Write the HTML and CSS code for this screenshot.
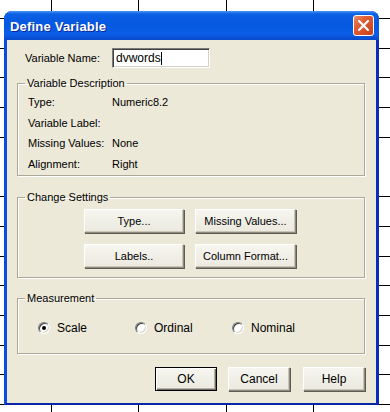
FILE: index.html
```html
<!DOCTYPE html>
<html lang="en">
<head>
  <meta charset="UTF-8">
  <title>Define Variable</title>
  <link rel="stylesheet" href="styles.css">
</head>
<body>

  <div class="window">
    <div class="titlebar">
      <span class="title">Define Variable</span>
      <button class="close-btn" aria-label="Close">
        <svg width="11" height="11" viewBox="0 0 11 11">
          <path d="M1 1 L10 10 M10 1 L1 10" stroke="#fff" stroke-width="2.2" stroke-linecap="square" fill="none"/>
        </svg>
      </button>
    </div>

    <div class="client">
      <div class="name-row">
        <span class="name-label">Variable Name:</span>
        <div class="textbox">dvwords<span class="caret"></span></div>
      </div>

      <fieldset class="group group-desc">
        <legend>Variable Description</legend>
        <div class="desc-grid">
          <span>Type:</span><span>Numeric8.2</span>
          <span>Variable Label:</span><span></span>
          <span>Missing Values:</span><span>None</span>
          <span>Alignment:</span><span>Right</span>
        </div>
      </fieldset>

      <fieldset class="group group-settings">
        <legend>Change Settings</legend>
        <div class="settings-grid">
          <button class="btn">Type...</button>
          <button class="btn">Missing Values...</button>
          <button class="btn">Labels..</button>
          <button class="btn">Column Format...</button>
        </div>
      </fieldset>

      <fieldset class="group group-measure">
        <legend>Measurement</legend>
        <div class="radio-row">
          <label class="radio"><span class="radio-dot checked"></span>Scale</label>
          <label class="radio"><span class="radio-dot"></span>Ordinal</label>
          <label class="radio"><span class="radio-dot"></span>Nominal</label>
        </div>
      </fieldset>

      <div class="dialog-buttons">
        <button class="btn btn-default">OK</button>
        <button class="btn">Cancel</button>
        <button class="btn btn-help">Help</button>
      </div>
    </div>
  </div>

</body>
</html>
```

FILE: styles.css
```css
body {
  margin: 0;
  padding: 11px 0 0 4px;
  height: 412px;
  box-sizing: border-box;
  overflow: hidden;
  font-family: "Liberation Sans", Arial, sans-serif;
  font-size: 11px;
  color: #000;
  background-color: #fff;
  /* spreadsheet grid behind the dialog */
  background-image:
    linear-gradient(#000, #000),
    linear-gradient(#000, #000),
    linear-gradient(#000, #000),
    linear-gradient(#000, #000),
    repeating-linear-gradient(to bottom, transparent 0 18px, #000 18px 19px, transparent 19px 29.7px);
  background-size: 1px 100%, 1px 100%, 1px 100%, 1px 100%, 100% 100%;
  background-position: 51px 0, 138px 0, 226px 0, 313px 0, 0 0;
  background-repeat: no-repeat;
}

.window {
  width: 375px;
  height: 394px;
  display: flex;
  flex-direction: column;
  border-radius: 8px 8px 0 0;
  overflow: hidden;
  background: #0a3fd8;
}

.titlebar {
  height: 29px;
  flex: none;
  display: flex;
  align-items: center;
  justify-content: space-between;
  padding: 2px 5px 0 6px;
  box-sizing: border-box;
  background: linear-gradient(#4a93f7 0, #0c60e4 3px, #0558e0 45%, #0a5de6 80%, #0748cc 100%);
}

.title {
  color: #fff;
  font-weight: bold;
  font-size: 13px;
  letter-spacing: 0.2px;
  text-shadow: 1px 1px 0 #0a2a9a;
}

.close-btn {
  width: 21px;
  height: 21px;
  margin-top: -2px;
  padding: 0;
  border: 1px solid #fff;
  border-radius: 3px;
  background: linear-gradient(135deg, #ea8a66 0, #e05a33 40%, #c9401c 100%);
  display: flex;
  align-items: center;
  justify-content: center;
}

.client {
  flex: 1;
  background: #ece9d8;
  border-left: 3px solid #0b4de0;
  border-right: 3px solid #0a2cbc;
  border-bottom: 2px solid #0a26a8;
  padding: 8px 11px 0 10px;
  display: flex;
  flex-direction: column;
}

.name-row {
  display: flex;
  align-items: center;
  padding-left: 8px;
}

.name-label {
  width: 87px;
}

.textbox {
  width: 98px;
  height: 20px;
  box-sizing: border-box;
  background: #fff;
  border: 1px solid;
  border-color: #7a7a7a #fff #fff #7a7a7a;
  box-shadow: inset 1px 1px 0 #404040, inset -1px -1px 0 #d4d0c8;
  padding: 0 0 0 3px;
  display: flex;
  align-items: center;
  font-size: 12px;
}

.caret {
  display: inline-block;
  width: 1px;
  height: 13px;
  background: #000;
}

.group {
  margin: 0;
  border: 1px solid #aca899;
  box-shadow: inset 1px 1px 0 #fff, 1px 1px 0 #fff;
  padding: 0 0 0 10px;
  min-width: 0;
}

.group legend {
  padding: 0 2px;
  margin-left: -3px;
  line-height: 14px;
}

.group-desc {
  margin-top: 8px;
  padding-top: 2px;
  padding-bottom: 1px;
}

.desc-grid {
  display: grid;
  grid-template-columns: 84px auto;
  grid-auto-rows: 20.6px;
  align-items: center;
}

.group-settings {
  margin-top: 14px;
  padding-top: 5px;
  padding-bottom: 9px;
}

.settings-grid {
  display: grid;
  grid-template-columns: 100px 101px;
  grid-auto-rows: 24px;
  gap: 11px;
  padding-left: 56px;
}

.btn {
  height: 24px;
  padding: 0;
  font-family: inherit;
  font-size: 11px;
  color: #000;
  border: 1px solid;
  border-color: #fff #8c8a7e #8c8a7e #fff;
  box-shadow: 1px 1px 0 #5e5c52, inset -1px -1px 0 #c9c6b6;
  background: linear-gradient(#f6f5ef, #ebe9df);
}

.group-measure {
  margin-top: 13px;
  padding-top: 13px;
  padding-bottom: 15px;
}

.radio-row {
  display: flex;
  height: 20px;
  align-items: center;
  padding-left: 10px;
}

.radio {
  width: 97px;
  display: flex;
  align-items: center;
  gap: 7px;
  font-size: 12px;
}

.radio-dot {
  width: 12px;
  height: 12px;
  box-sizing: border-box;
  border-radius: 50%;
  border: 1px solid;
  border-color: #808080 #fff #fff #808080;
  box-shadow: inset 1px 1px 0 #404040, inset -1px -1px 0 #d4d0c8;
  background: #fff;
  display: flex;
  align-items: center;
  justify-content: center;
}

.radio-dot.checked::after {
  content: "";
  width: 4px;
  height: 4px;
  border-radius: 50%;
  background: #000;
}

.dialog-buttons {
  margin-top: 13px;
  display: flex;
  justify-content: flex-end;
  gap: 11px;
}

.dialog-buttons .btn {
  width: 62px;
  font-size: 12px;
}

.btn-help {
  margin-left: 2px;
}

.btn-default {
  border: 1px solid #000;
  box-shadow: inset 1px 1px 0 #fff, inset -1px -1px 0 #6e6c62, inset -2px -2px 0 #b8b5a6;
}
```
